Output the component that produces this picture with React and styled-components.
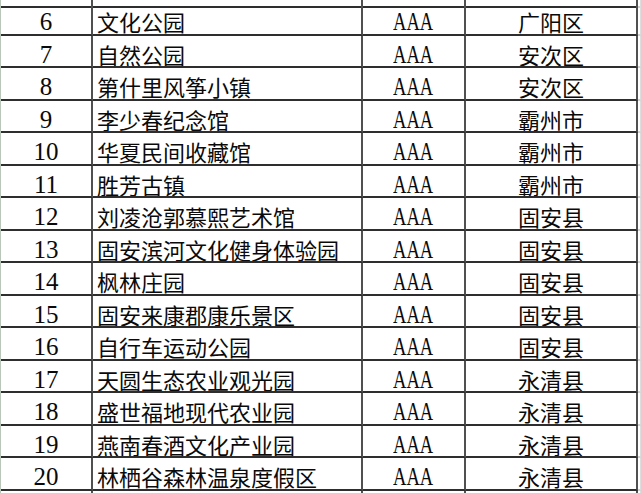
import React from 'react';
import styled, {createGlobalStyle} from 'styled-components';

const GlobalStyle = createGlobalStyle`
  html, body {
    margin: 0;
    padding: 0;
    background: #ffffff;
  }
`;

const ROWS = [
    [6, '文化公园', 'AAA', '广阳区'],
    [7, '自然公园', 'AAA', '安次区'],
    [8, '第什里风筝小镇', 'AAA', '安次区'],
    [9, '李少春纪念馆', 'AAA', '霸州市'],
    [10, '华夏民间收藏馆', 'AAA', '霸州市'],
    [11, '胜芳古镇', 'AAA', '霸州市'],
    [12, '刘凌沧郭慕熙艺术馆', 'AAA', '固安县'],
    [13, '固安滨河文化健身体验园', 'AAA', '固安县'],
    [14, '枫林庄园', 'AAA', '固安县'],
    [15, '固安来康郡康乐景区', 'AAA', '固安县'],
    [16, '自行车运动公园', 'AAA', '固安县'],
    [17, '天圆生态农业观光园', 'AAA', '永清县'],
    [18, '盛世福地现代农业园', 'AAA', '永清县'],
    [19, '燕南春酒文化产业园', 'AAA', '永清县'],
    [20, '林栖谷森林温泉度假区', 'AAA', '永清县'],
];

const Sheet = styled.div`
  width: 641px;
  height: 493px;
  overflow: hidden;
  border-left: 1px solid #b9c6b9;
  box-sizing: border-box;
  display: flex;
  flex-direction: column;
`;

const Row = styled.div`
  display: grid;
  grid-template-columns: 92px 270px 103px 172px 1fr;
  flex: 0 0 auto;
  height: ${p => p.$height}px;
  box-sizing: border-box;
`;

const Cell = styled.div`
  box-sizing: border-box;
  border-right: 2px solid #505050;
  border-bottom: 2px solid ${p => (p.$open ? 'transparent' : '#2e2e2e')};
  display: flex;
  align-items: flex-start;
  justify-content: ${p => p.$align || 'center'};
  padding-top: 6px;
  padding-left: ${p => (p.$align === 'flex-start' ? '4px' : '0')};
  color: #0a0a0a;
  overflow: hidden;
  white-space: nowrap;
`;

const Gutter = styled.div`
  box-sizing: border-box;
  border-right: 1px solid #dddddd;
  border-bottom: 2px solid ${p => (p.$open ? 'transparent' : '#d4d4d4')};
`;

const Num = styled.span`
  font-family: "Liberation Serif", "Times New Roman", serif;
  font-size: 25px;
  line-height: 26px;
`;

const Han = styled.span`
  font-family: "Noto Sans CJK SC", "Noto Sans", sans-serif;
  font-size: 22px;
  line-height: 25px;
  font-weight: 400;
`;

const Grade = styled.span`
  display: inline-block;
  font-family: "Liberation Serif", "Times New Roman", serif;
  font-size: 25px;
  line-height: 26px;
  transform: scaleX(0.74);
`;

const TopEdge = () => (
    <Row $height={3}>
        <Cell/>
        <Cell/>
        <Cell/>
        <Cell/>
        <Gutter/>
    </Row>
);

const DataRow = ({num, name, grade, district}) => (
    <Row $height={32.53}>
        <Cell><Num>{num}</Num></Cell>
        <Cell $align="flex-start"><Han>{name}</Han></Cell>
        <Cell><Grade>{grade}</Grade></Cell>
        <Cell><Han>{district}</Han></Cell>
        <Gutter/>
    </Row>
);

export default function App() {
    return (
        <>
            <GlobalStyle/>
            <Sheet>
                <TopEdge/>
                {ROWS.map(([num, name, grade, district]) => (
                    <DataRow key={num} num={num} name={name} grade={grade} district={district}/>
                ))}
                <Row $height={32}>
                    <Cell $open/>
                    <Cell $open/>
                    <Cell $open/>
                    <Cell $open/>
                    <Gutter $open/>
                </Row>
            </Sheet>
        </>
    );
}
